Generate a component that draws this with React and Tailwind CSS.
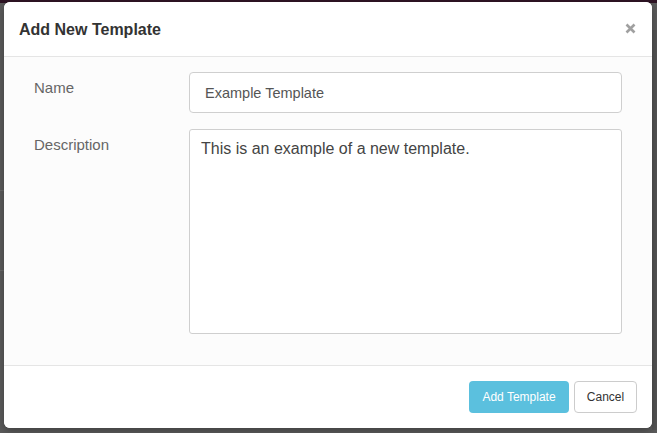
import React from "react";

export default function App() {
  return (
    <div
      className="w-[657px] h-[433px] overflow-hidden bg-[#5b5b5b] relative"
      style={{ fontFamily: '"Liberation Sans", Arial, Helvetica, sans-serif' }}
    >
      <div className="absolute top-0 left-0 right-0 h-[3px] bg-[#2e1424]" />
      <div className="absolute top-[190px] left-0 w-[4px] h-px bg-[#6a6a6a]" />
      <div className="absolute top-[270px] left-0 w-[4px] h-px bg-[#6a6a6a]" />
      <div className="absolute top-[30px] right-0 w-[5px] h-[400px] bg-[#535353]" />
      <div className="relative ml-[4px] mt-[2px] w-[648px] h-[426px] rounded-[6px] bg-white overflow-hidden flex flex-col shadow-[0_3px_9px_rgba(0,0,0,0.3)]">
        <div className="h-[55px] shrink-0 flex items-center justify-between pl-[15px] pr-[16px] border-b border-[#e5e5e5] bg-white">
          <h4 className="text-[16px] font-bold text-[#333] leading-none mt-[2px]">Add New Template</h4>
          <svg width="11" height="11" viewBox="0 0 11 11" className="mt-[-1px]">
            <path d="M1.5 1.5 L9.5 9.5 M9.5 1.5 L1.5 9.5" stroke="#a0a0a0" strokeWidth="2.6" strokeLinecap="butt" />
          </svg>
        </div>
        <div className="h-[308px] shrink-0 bg-[#fcfcfc] pt-[15px] pl-[30px] pr-[30px] flex flex-col gap-[16px]">
          <div className="flex">
            <div className="w-[155px] shrink-0 pt-[6px] text-[15px] leading-[20px] text-[#666]">Name</div>
            <div className="flex-1 h-[41px] rounded-[4px] border border-[#cfcfcf] bg-white flex items-center pl-[15px] pt-[3px] text-[14.5px] text-[#555]">
              Example Template
            </div>
          </div>
          <div className="flex">
            <div className="w-[155px] shrink-0 pt-[6px] text-[15px] leading-[20px] text-[#666]">Description</div>
            <div className="flex-1 h-[205px] rounded-[3px] border border-[#cfcfcf] bg-white pl-[11px] pt-[8px] text-[16px] leading-[22px] text-[#444]">
              This is an example of a new template.
            </div>
          </div>
        </div>
        <div className="flex-1 border-t border-[#e5e5e5] bg-white flex justify-end items-start pt-[15px] pr-[15px] gap-[5px]">
          <button className="w-[100px] h-[32px] rounded-[4px] bg-[#5bc0de] text-white text-[12px] leading-none">
            Add Template
          </button>
          <button className="w-[63px] h-[32px] rounded-[4px] border border-[#ccc] bg-white text-[#333] text-[12px] leading-none">
            Cancel
          </button>
        </div>
      </div>
    </div>
  );
}
